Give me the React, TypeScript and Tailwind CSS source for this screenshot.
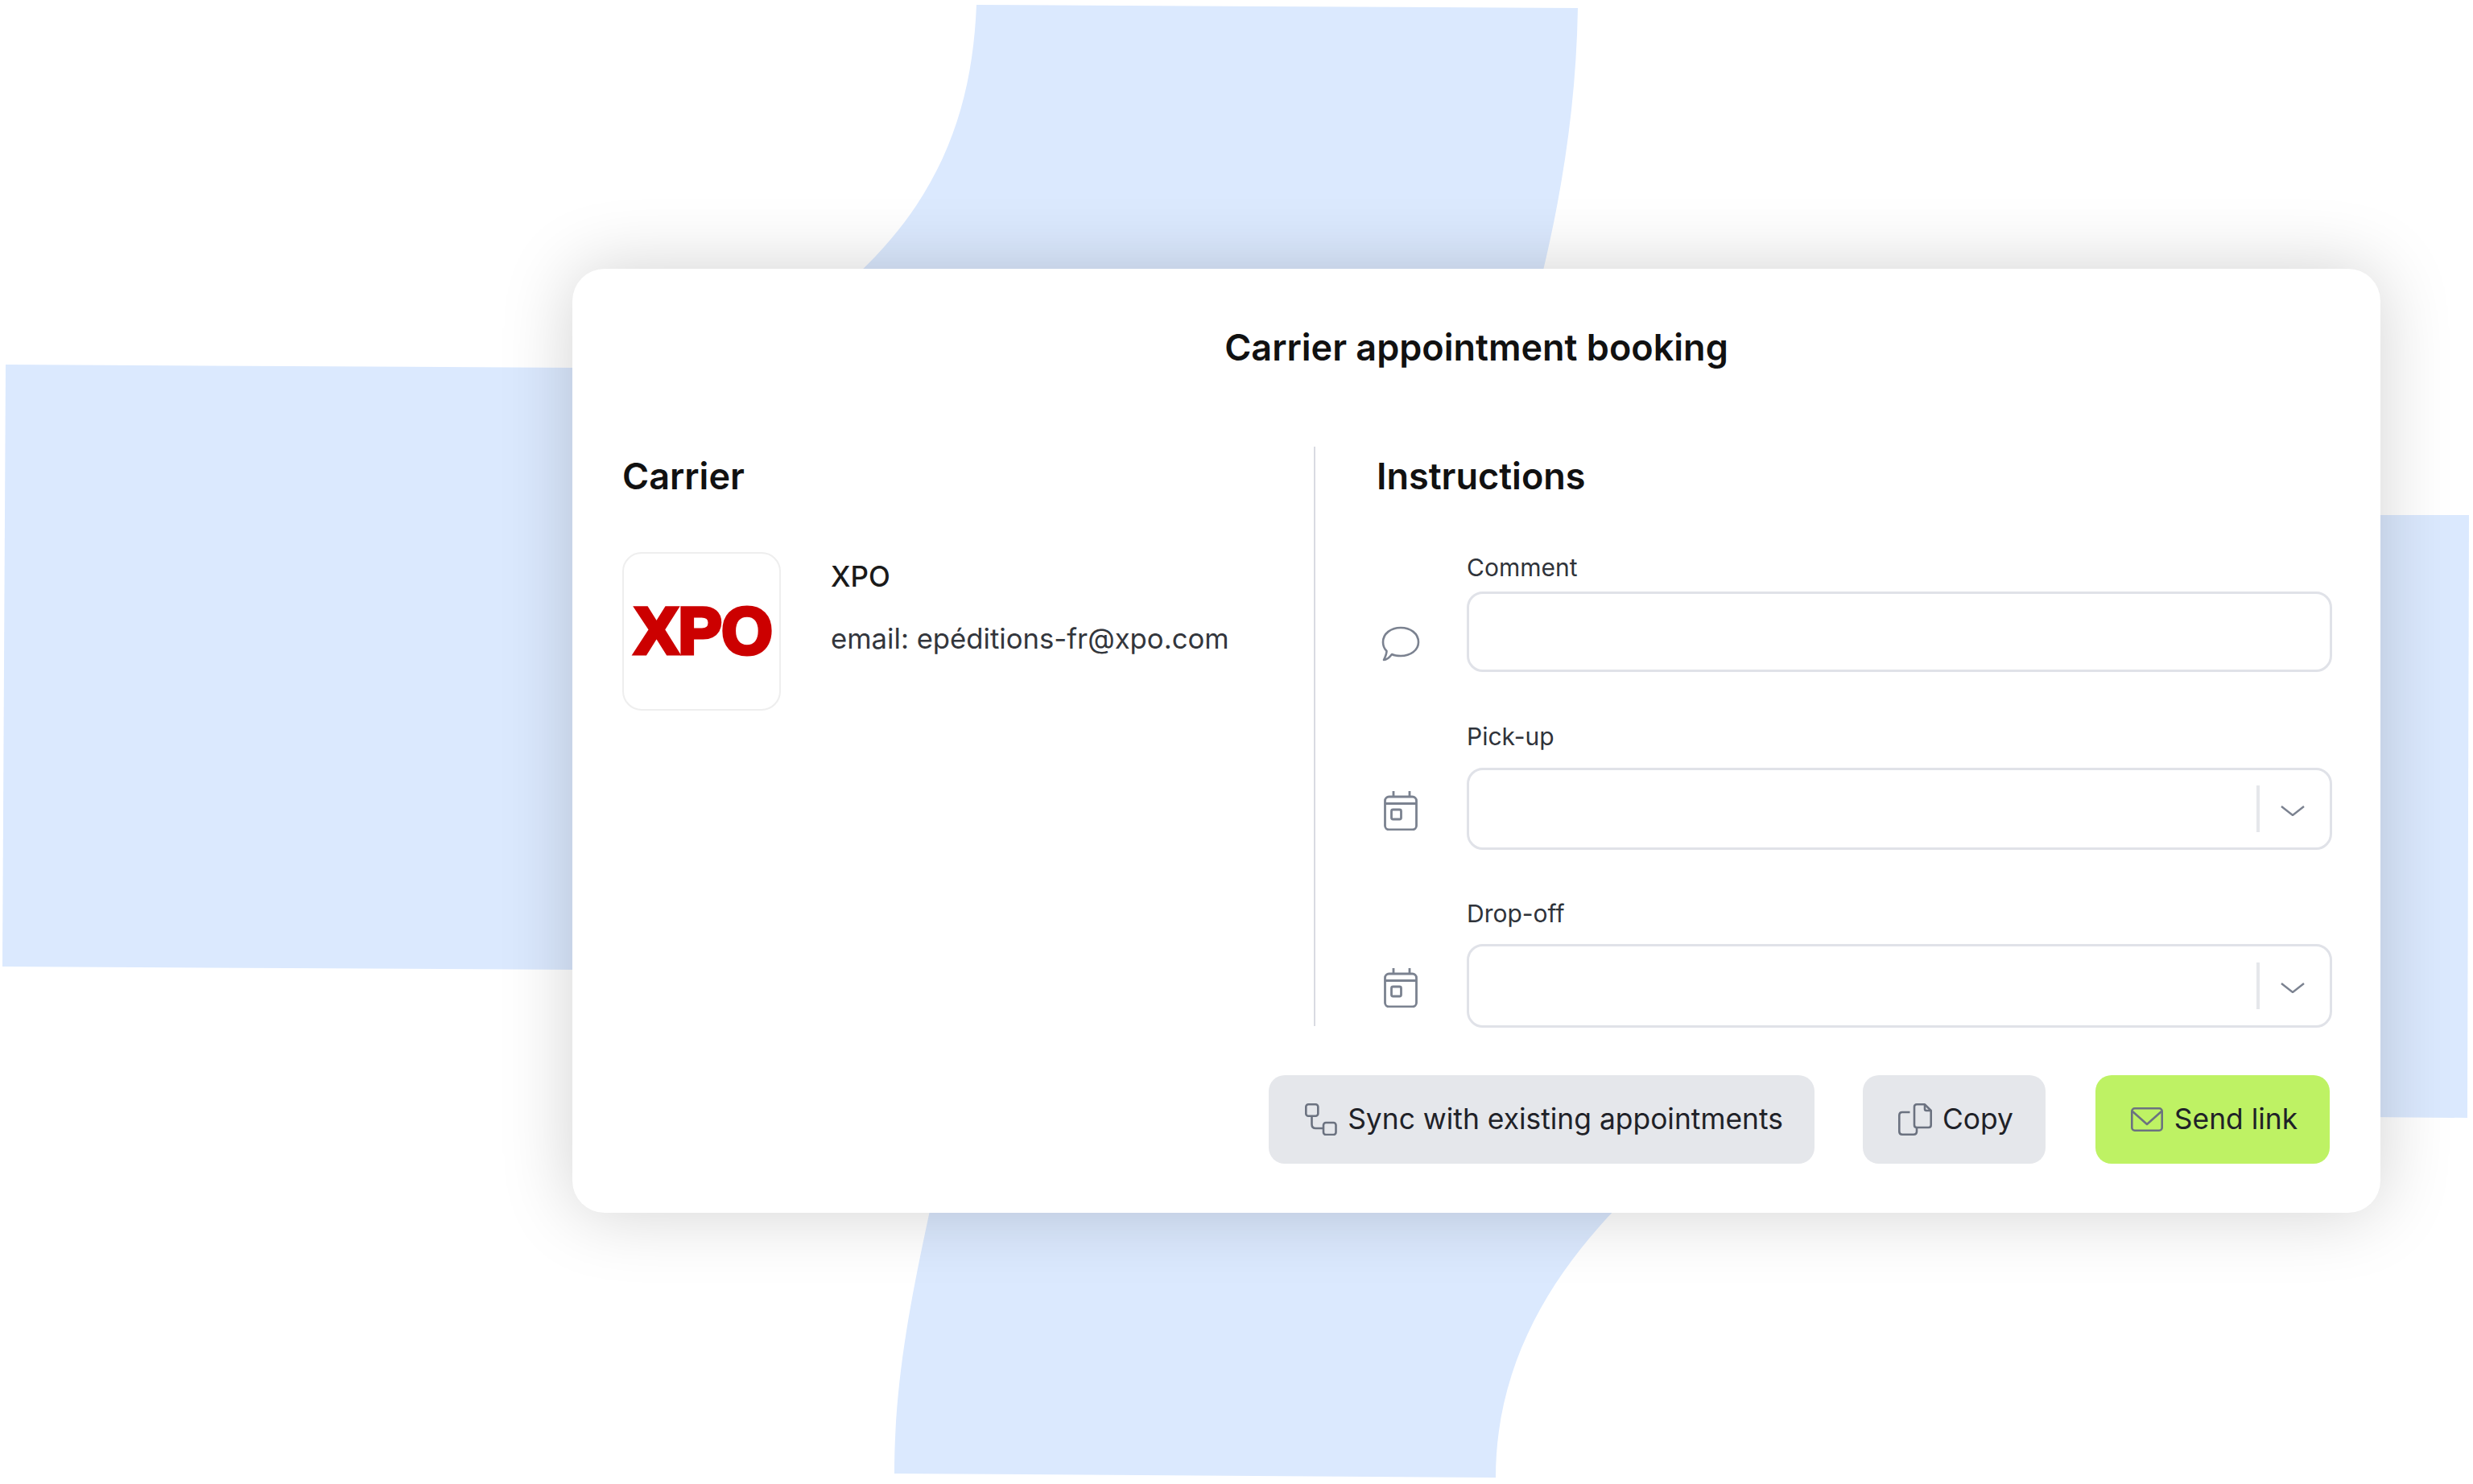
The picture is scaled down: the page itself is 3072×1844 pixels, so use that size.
import React from "react";

const font = { fontFamily: "Inter, 'Liberation Sans', sans-serif" };

function Backdrop() {
  return (
    <svg className="absolute inset-0" width="3072" height="1844" viewBox="0 0 3072 1844" fill="#dbe9fe">
      <path d="M7 453 L720 457 L720 1205 L3 1201 Z" />
      <path d="M2940 640 L3067 640 L3065 1389 L2940 1388 Z" />
      <path d="M1213 6 L1960 10 C1958 130 1940 240 1916 340 L1066 340 C1172 240 1208 130 1213 6 Z" />
      <path d="M1156 1500 L2009 1500 C1922 1590 1858 1700 1858 1836 L1111 1831 C1111 1720 1130 1620 1156 1500 Z" />
    </svg>
  );
}

function ChatIcon() {
  return (
    <svg width="48" height="44" viewBox="0 0 48 44" fill="none" stroke="#7b8290" strokeWidth="2.6" strokeLinejoin="round">
      <path d="M13 35 C10 39 7 42 3 42 C5 38 6.5 34 6.5 31 C3.5 28 2 24 2 20 C2 9 12 2 24 2 C36 2 46 9 46 20 C46 30 36 37 24 37 C20 37 16 36.5 13 35 Z" />
    </svg>
  );
}

function CalendarIcon() {
  return (
    <svg width="42" height="49" viewBox="0 0 42 49" fill="none" stroke="#7b8290" strokeWidth="2.8">
      <rect x="1.5" y="7" width="39" height="41" rx="5" />
      <path d="M1.5 15.5 H40.5 M12 0 V7 M32 0 V7" />
      <rect x="9.5" y="23" width="12" height="12" rx="2" />
    </svg>
  );
}

function SyncIcon() {
  return (
    <svg width="40" height="40" viewBox="0 0 40 40" fill="none" stroke="#6b7280" strokeWidth="2.6">
      <rect x="1.3" y="1.3" width="15" height="14.5" rx="3" />
      <rect x="23" y="24" width="15.5" height="15" rx="3" />
      <path d="M8.5 16 V26 Q8.5 31 13.5 31 H23" />
    </svg>
  );
}

function CopyIcon() {
  return (
    <svg width="42" height="40" viewBox="0 0 42 40" fill="none" stroke="#6b7280" strokeWidth="2.6" strokeLinejoin="round">
      <path d="M23 1.3 H33 L40.7 9 V27 Q40.7 30 37.7 30 H23 Q20 30 20 27 V4.3 Q20 1.3 23 1.3 Z" />
      <path d="M33 1.3 V7 Q33 9 35 9 H40.7" />
      <path d="M14.5 11 H5 Q1.3 11 1.3 15 V35 Q1.3 38.7 5 38.7 H19 Q23 38.7 23 35 V30.5" />
    </svg>
  );
}

function MailIcon() {
  return (
    <svg width="40" height="30" viewBox="0 0 40 30" fill="none" stroke="#6b7280" strokeWidth="2.6" strokeLinejoin="round">
      <rect x="1.3" y="1.3" width="37.4" height="27.4" rx="3.5" />
      <path d="M2 5 L20 21 L38 5" />
    </svg>
  );
}

function Chevron() {
  return (
    <svg width="30" height="13" viewBox="0 0 30 13" fill="none" stroke="#7b8290" strokeWidth="2.4">
      <path d="M1 1 L15 12 L29 1" />
    </svg>
  );
}

function Field({
  label,
  icon,
  iconClass,
  labelGap,
  height,
  select,
  bottomGap,
}: {
  label: string;
  icon: React.ReactNode;
  iconClass: string;
  labelGap: string;
  height: string;
  select?: boolean;
  bottomGap: string;
}) {
  return (
    <div className={`flex items-end ${bottomGap}`}>
      <div className={`w-[112px] flex ${iconClass}`}>{icon}</div>
      <div className="flex-1">
        <div className={`text-[30px] leading-[40px] text-[#2f333a] ${labelGap}`}>{label}</div>
        <div className={`${height} rounded-[20px] border-[3px] border-[#e0e2e8] bg-white flex items-center justify-end`}>
          {select && (
            <>
              <div className="w-[4px] h-[58px] bg-[#e5e7eb] mr-[26px]" />
              <div className="mr-[31px] mt-[4px]">
                <Chevron />
              </div>
            </>
          )}
        </div>
      </div>
    </div>
  );
}

export default function App() {
  return (
    <div className="relative w-[3072px] h-[1844px] bg-white overflow-hidden pt-[334px] pl-[711px]" style={font}>
      <Backdrop />
      <div className="relative w-[2246px] h-[1173px] rounded-[40px] bg-white shadow-[0_0_90px_rgba(0,0,0,0.18)] flex flex-col">
        <h1 className="pt-[70px] text-center text-[45px] leading-[56px] font-semibold text-[#111111] mb-[95px]">
          Carrier appointment booking
        </h1>
        <div className="flex h-[720px]">
          <div className="w-[923px] pl-[62px] border-r-2 border-[#d9dbe2]">
            <h2 className="mt-[9px] text-[45px] leading-[56px] font-semibold text-[#111111] mb-[66px]">Carrier</h2>
            <div className="flex">
              <div className="w-[197px] h-[197px] rounded-[24px] border-2 border-[#eeeeee] flex items-center justify-center mr-[62px]">
                <span
                  className="ml-[5px] text-[81px] leading-none font-bold text-[#cc0000] [-webkit-text-stroke:5px_#cc0000]"
                  style={{ fontFamily: "'Liberation Sans', sans-serif" }}
                >
                  XPO
                </span>
              </div>
              <div>
                <div className="mt-[6px] text-[35px] leading-[48px] font-medium text-[#1a1a1a]">XPO</div>
                <div className="mt-[29px] text-[34.7px] leading-[48px] text-[#33363c]">email: epéditions-fr@xpo.com</div>
              </div>
            </div>
          </div>
          <div className="flex-1 pl-[76px] pr-[60px]">
            <h2 className="mt-[9px] text-[45px] leading-[56px] font-semibold text-[#111111] mb-[65px]">Instructions</h2>
            <Field label="Comment" icon={<ChatIcon />} iconClass="pl-[6px] pb-[13px]" labelGap="mb-[10px]" height="h-[100px]" bottomGap="mb-[60px]" />
            <Field label="Pick-up" icon={<CalendarIcon />} iconClass="pl-[9px] pb-[24px]" labelGap="mb-[19px]" height="h-[102px]" select bottomGap="mb-[59px]" />
            <Field label="Drop-off" icon={<CalendarIcon />} iconClass="pl-[9px] pb-[25px]" labelGap="mb-[18px]" height="h-[104px]" select bottomGap="" />
          </div>
        </div>
        <div className="flex justify-end mt-[61px] pr-[63px] text-[35.4px] text-[#1f2228]">
          <button className="w-[678px] h-[110px] rounded-[20px] bg-[#e5e7eb] flex items-center justify-center gap-[13px] pl-[6px]">
            <SyncIcon />
            Sync with existing appointments
          </button>
          <button className="ml-[60px] w-[227px] h-[110px] rounded-[20px] bg-[#e5e7eb] flex items-center justify-center gap-[13px] pl-[4px]">
            <CopyIcon />
            Copy
          </button>
          <button className="ml-[62px] w-[291px] h-[110px] rounded-[20px] bg-[#bef264] flex items-center justify-center gap-[14px] pl-[4px]">
            <MailIcon />
            Send link
          </button>
        </div>
      </div>
    </div>
  );
}
